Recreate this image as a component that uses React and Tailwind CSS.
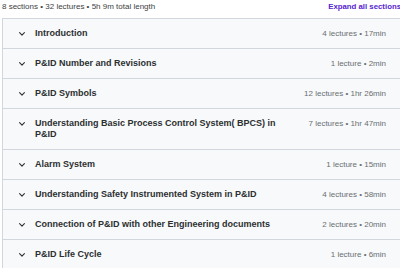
import React from "react";

const sections = [
  { title: "Introduction", meta: "4 lectures • 17min" },
  { title: "P&ID Number and Revisions", meta: "1 lecture • 2min" },
  { title: "P&ID Symbols", meta: "12 lectures • 1hr 26min" },
  { title: "Understanding Basic Process Control System( BPCS) in P&ID", meta: "7 lectures • 1hr 47min" },
  { title: "Alarm System", meta: "1 lecture • 15min" },
  { title: "Understanding Safety Instrumented System in P&ID", meta: "4 lectures • 58min" },
  { title: "Connection of P&ID with other Engineering documents", meta: "2 lectures • 20min" },
  { title: "P&ID Life Cycle", meta: "1 lecture • 6min" },
];

function Chevron() {
  return (
    <svg width="6" height="4" viewBox="0 0 6 4" className="mt-[4px] mr-[10px] shrink-0">
      <path d="M0.6 0.7 L3 3.1 L5.4 0.7" fill="none" stroke="#2d2f31" strokeWidth="1.1" strokeLinecap="round" strokeLinejoin="round" />
    </svg>
  );
}

export default function App() {
  return (
    <div className="w-[400px] h-[268px] overflow-hidden bg-white">
      <div className="w-[401px] pl-[2px] font-['Liberation_Sans',Arial,sans-serif]">
        <div className="flex h-[18px] items-start justify-between pt-[2px]">
          <span className="text-[8px] leading-[10px] text-[#3e4143]">
            8 sections • 32 lectures • 5h 9m total length
          </span>
          <span className="text-[7.8px] leading-[10px] font-bold text-[#5624d0] whitespace-nowrap">
            Expand all sections
          </span>
        </div>
        <div className="border-t border-l border-r border-[#d1d7dc]">
          {sections.map((s) => (
            <div
              key={s.title}
              className="flex items-start border-b border-[#d1d7dc] bg-[#f7f9fa] py-[9px] pl-[16px] pr-[14px]"
            >
              <Chevron />
              <div className="flex-1 text-[9px] leading-[11px] font-bold text-[#2d2f31]">
                {s.title}
              </div>
              <div className="ml-[24px] shrink-0 whitespace-nowrap text-[8px] leading-[11px] text-[#6a6f73]">
                {s.meta}
              </div>
            </div>
          ))}
        </div>
      </div>
    </div>
  );
}
